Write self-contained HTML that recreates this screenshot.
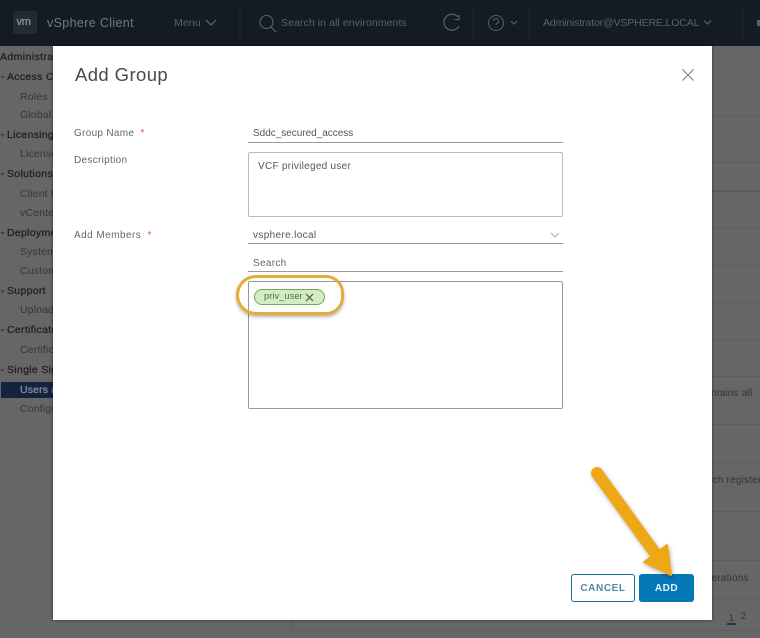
<!DOCTYPE html>
<html>
<head>
<meta charset="utf-8">
<style>
html,body{margin:0;padding:0}
body{width:760px;height:638px;position:relative;overflow:hidden;background:#666;font-family:"Liberation Sans",sans-serif}
#w{position:absolute;left:0;top:0;width:760px;height:638px;overflow:hidden;filter:blur(.35px)}
.a{position:absolute;white-space:nowrap}
.hd{left:0;top:0;width:760px;height:46px;background:#141b24}
.nav{color:#5a6168;font-size:10.5px}
.side{color:#363636;font-size:10.5px;letter-spacing:.15px}
.b{color:#222;letter-spacing:.3px;-webkit-text-stroke:.3px #222}
.ln{left:291px;width:469px;height:1px;background:#5c5c5c}
.modal{left:53px;top:46px;width:659px;height:574px;background:#fff;box-shadow:0 0 3px rgba(0,0,0,.55)}
.lab{color:#666;font-size:10px;letter-spacing:.3px}
.val{color:#555;font-size:10px;letter-spacing:.3px}
.ul{height:1px;background:#9a9a9a;left:248px;width:315px}
.box{left:248px;box-sizing:border-box;width:315px;border:1px solid #b9b9b9;border-radius:2px;background:#fff}
</style>
</head>
<body>
<div id="w">
<div class="a hd"></div>
<div class="a" style="left:13px;top:11px;width:24px;height:23px;background:#222a33;border-radius:2px"></div>
<div class="a" style="left:16.500px;top:16px;color:#8d9297;font-size:11px;letter-spacing:-.2px;-webkit-text-stroke:.3px #8d9297">vm</div>
<div class="a" style="left:47px;top:16px;color:#747a80;font-size:12.5px;letter-spacing:.35px">vSphere Client</div>
<div class="a nav" style="left:174px;top:17px;font-size:10.5px;letter-spacing:.1px">Menu</div>
<svg class="a" style="left:0;top:0" width="760" height="46" fill="none" stroke="#5a6168">
<path d="M206 20l5 5 5-5" stroke-width="1.3"/>
<path d="M240 8v30" stroke="#222932"/>
<circle cx="266.500" cy="22" r="6.500" stroke-width="1.100"/><path d="M271 27l5 5" stroke-width="1.200"/>
<path d="M458 17a8 8 0 1 0 1 9" stroke-width="1.200"/><path d="M459 15v4.500h-4.500" stroke-width="1.100"/>
<path d="M473 8v30M529 8v30M743 8v30" stroke="#222932"/>
<circle cx="496" cy="23" r="7.500" stroke-width="1"/><path d="M493.500 21a2.500 2.500 0 1 1 3.500 2.300c-.7.4-1 .8-1 1.700M496 27v.8" stroke-width="1"/>
<path d="M511 21l3 3 3-3" stroke-width="1.200"/>
<path d="M704 20.500l3.500 3.500 3.500-3.500" stroke-width="1.200"/>
</svg>
<div class="a nav" style="left:281px;top:16.500px;letter-spacing:.08px">Search in all environments</div>
<div class="a nav" style="left:543px;top:16.500px;letter-spacing:-.14px;width:156px;overflow:hidden">Administrator@VSPHERE.LOCAL</div>
<div class="a" style="left:757px;top:20px;width:3px;height:6px;background:#5a6168"></div>

<div class="a" style="left:0;top:1px;width:53px;height:420px;overflow:hidden">
<div class="a side b" style="left:0;top:50px;letter-spacing:.4px">Administration</div>
<div class="a side b" style="left:7px;top:70px">Access Control</div>
<div class="a side" style="left:20px;top:90px">Roles</div>
<div class="a side" style="left:20px;top:108px">Global</div>
<div class="a side b" style="left:7px;top:128px">Licensing</div>
<div class="a side" style="left:20px;top:147px">Licenses</div>
<div class="a side b" style="left:7px;top:167px">Solutions</div>
<div class="a side" style="left:20px;top:187px">Client Plugins</div>
<div class="a side" style="left:20px;top:206px">vCenter</div>
<div class="a side b" style="left:7px;top:226px">Deployment</div>
<div class="a side" style="left:20px;top:245px">System</div>
<div class="a side" style="left:20px;top:264px">Customer</div>
<div class="a side b" style="left:7px;top:284px">Support</div>
<div class="a side" style="left:20px;top:303px">Upload</div>
<div class="a side b" style="left:7px;top:323px">Certificates</div>
<div class="a side" style="left:20px;top:343px">Certificate</div>
<div class="a side b" style="left:7px;top:363px">Single Sign</div>
<div class="a" style="left:1px;top:381px;width:60px;height:16px;background:#14243f"></div>
<div class="a side" style="left:20px;top:383px;color:#858c98;-webkit-text-stroke:.3px #858c98">Users and</div>
<div class="a side" style="left:20px;top:402px">Configuration</div>
<svg class="a" style="left:0;top:60px" width="6" height="320" fill="#444">
<path d="M0 15h5l-2.500 3zM0 73h5l-2.500 3zM0 112h5l-2.500 3zM0 171h5l-2.500 3zM0 229h5l-2.500 3zM0 268h5l-2.500 3zM0 308h5l-2.500 3z"/>
</svg>
</div>

<div class="a ln" style="top:115px"></div>
<div class="a ln" style="top:162px"></div>
<div class="a ln" style="top:190px;height:2px"></div>
<div class="a ln" style="top:228px"></div>
<div class="a ln" style="top:265px"></div>
<div class="a ln" style="top:302px"></div>
<div class="a ln" style="top:339px"></div>
<div class="a ln" style="top:376px"></div>
<div class="a ln" style="top:424px"></div>
<div class="a ln" style="top:462px"></div>
<div class="a ln" style="top:511px"></div>
<div class="a ln" style="top:560px"></div>
<div class="a ln" style="top:598px"></div>
<div class="a ln" style="top:630px"></div>
<div class="a" style="left:291px;top:620px;width:1px;height:10px;background:#5c5c5c"></div>
<div class="a" style="left:700px;top:387.500px;color:#333;font-size:10px;letter-spacing:.2px">contains all</div>
<div class="a" style="left:697px;top:474.500px;color:#333;font-size:10px;letter-spacing:.2px">which registered</div>
<div class="a" style="left:700px;top:572.500px;color:#333;font-size:10px;letter-spacing:.2px">operations</div>
<div class="a" style="left:729px;top:613px;color:#333;font-size:9px">1</div>
<div class="a" style="left:741px;top:611px;color:#333;font-size:9px">2</div>
<div class="a" style="left:727px;top:623px;width:9px;height:2px;background:#1c3a5c"></div>

<div class="a modal"></div>
<div class="a" style="left:75px;top:63.500px;color:#4a4a4a;font-size:18.5px;letter-spacing:.4px">Add Group</div>
<svg class="a" style="left:681px;top:68px" width="14" height="14" stroke="#808080" stroke-width="1.100"><path d="M1.500 1.500l11 11M12.500 1.500l-11 11"/></svg>

<div class="a lab" style="left:74px;top:128px">Group Name <span style="color:#d9534f;margin-left:3px">*</span></div>
<div class="a val" style="left:253px;top:127.500px;letter-spacing:-.02px">Sddc_secured_access</div>
<div class="a ul" style="top:142px"></div>

<div class="a lab" style="left:74px;top:155px">Description</div>
<div class="a box" style="top:152px;height:65px"></div>
<div class="a val" style="left:258px;top:161px;letter-spacing:.28px">VCF privileged user</div>

<div class="a lab" style="left:74px;top:230px;letter-spacing:.45px">Add Members <span style="color:#d9534f;margin-left:3px">*</span></div>
<div class="a val" style="left:253px;top:230px;letter-spacing:.35px">vsphere.local</div>
<svg class="a" style="left:550px;top:232px" width="10" height="7" fill="none" stroke="#aaa"><path d="M1 1l4 4 4-4"/></svg>
<div class="a ul" style="top:243px"></div>
<div class="a val" style="left:253px;top:258px;color:#666">Search</div>
<div class="a ul" style="top:271px"></div>

<div class="a box" style="top:281px;height:128px;border-color:#999"></div>
<div class="a" style="left:254px;top:289px;width:71px;height:16px;box-sizing:border-box;background:#d4ecc2;border:1px solid #6fa85c;border-radius:8px"></div>
<div class="a" style="left:264px;top:291px;color:#4d6b3f;font-size:9px;letter-spacing:.2px">priv_user</div>
<svg class="a" style="left:305px;top:293px" width="9" height="9" stroke="#4a5a45" stroke-width="1.200"><path d="M1 1l7 7M8 1l-7 7"/></svg>
<div class="a" style="left:236px;top:275px;width:108px;height:40px;box-sizing:border-box;border:3px solid #e5ad35;border-radius:20px 18px 18px 20px;box-shadow:0 2px 3px rgba(0,0,0,.3)"></div>

<div class="a" style="left:571px;top:574px;width:64px;height:28px;box-sizing:border-box;border:1px solid #0f7299;border-radius:3px;text-align:center;line-height:27px;color:#4f8ba8;font-size:10px;font-weight:bold;letter-spacing:.6px">CANCEL</div>
<div class="a" style="left:639px;top:574px;width:55px;height:28px;background:#0579b8;border-radius:3px;text-align:center;line-height:29px;color:#e8f2f8;font-size:10px;font-weight:bold;letter-spacing:.5px">ADD</div>

<svg class="a" style="left:585px;top:460px;filter:drop-shadow(1px 2px 2px rgba(0,0,0,.3))" width="95" height="130">
<path d="M12 13L70 93" stroke="#efa815" stroke-width="12" stroke-linecap="round" fill="none"/>
<path d="M82 85L86 115L59 102Z" fill="#efa815" stroke="#efa815" stroke-width="2" stroke-linejoin="round"/>
</svg>
</div>
</body>
</html>
